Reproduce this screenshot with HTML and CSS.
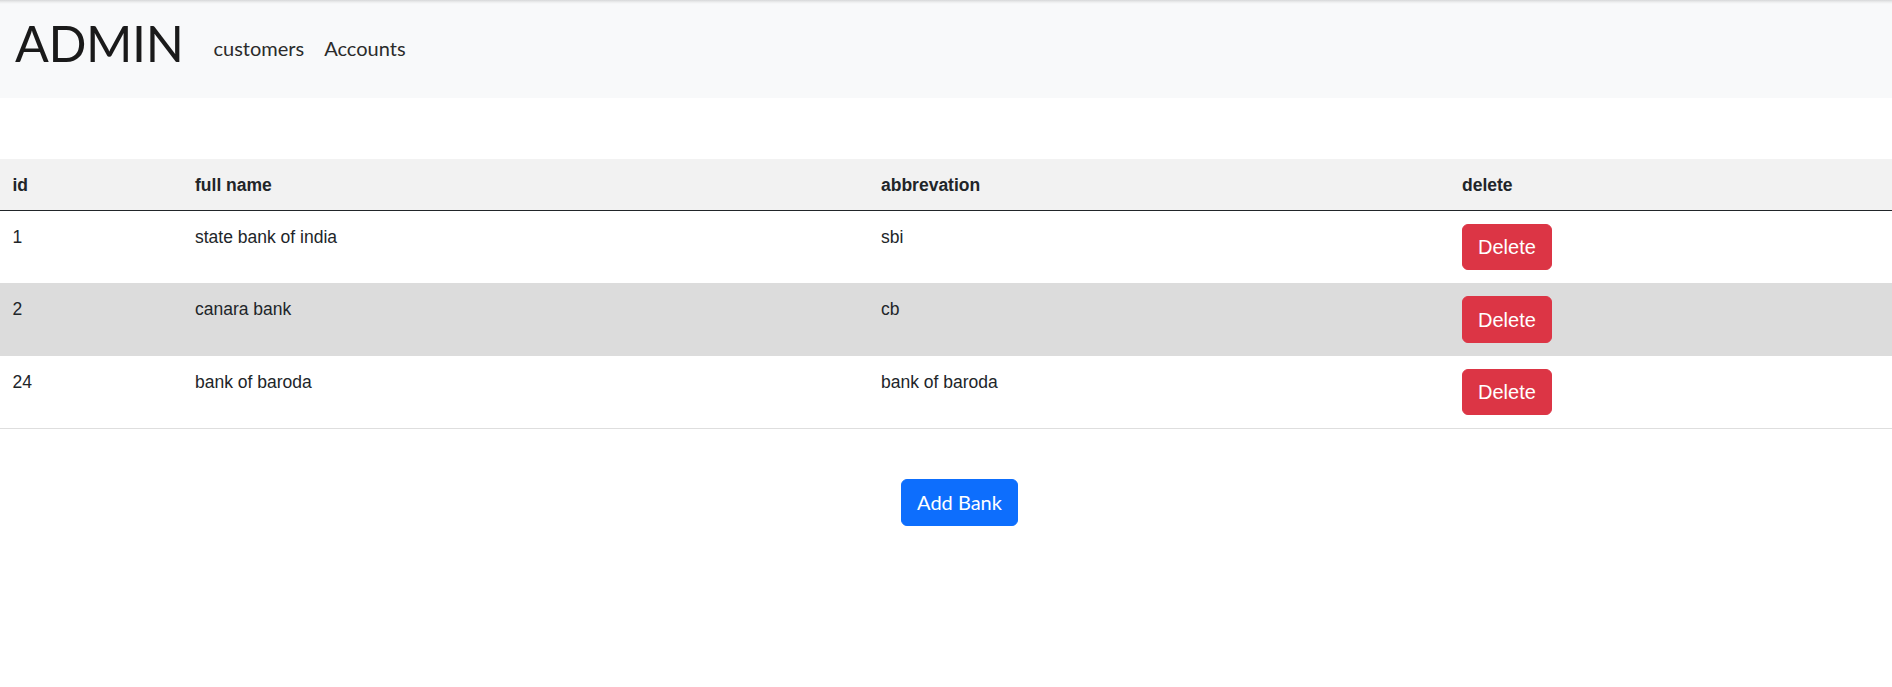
FILE: index.html
```html
<!DOCTYPE html>
<html>
<head>
<meta charset="utf-8">
<title>Admin - Banks</title>
<link rel="stylesheet" href="styles.css">
</head>
<body>
<nav class="navbar">
  <h1 class="brand">ADMIN</h1>
  <ul class="nav">
    <li><a class="nav-link" href="#">customers</a></li>
    <li><a class="nav-link" href="#">Accounts</a></li>
  </ul>
</nav>

<main class="content">
  <table class="banks">
    <colgroup>
      <col class="c-id">
      <col class="c-name">
      <col class="c-abbr">
      <col class="c-del">
    </colgroup>
    <thead>
      <tr><th>id</th><th>full name</th><th>abbrevation</th><th>delete</th></tr>
    </thead>
    <tbody>
      <tr>
        <td>1</td><td>state bank of india</td><td>sbi</td>
        <td><button class="btn-delete">Delete</button></td>
      </tr>
      <tr class="alt">
        <td>2</td><td>canara bank</td><td>cb</td>
        <td><button class="btn-delete">Delete</button></td>
      </tr>
      <tr>
        <td>24</td><td>bank of baroda</td><td>bank of baroda</td>
        <td><button class="btn-delete">Delete</button></td>
      </tr>
    </tbody>
  </table>

  <div class="actions">
    <button class="btn-add">Add Bank</button>
  </div>
</main>
</body>
</html>
```

FILE: styles.css
```css
* { box-sizing: border-box; }

html, body {
  margin: 0;
  padding: 0;
  background: #fff;
  color: #212529;
}

.navbar {
  display: flex;
  align-items: flex-start;
  height: 98px;
  padding: 12.5px 15px 0;
  background: linear-gradient(to bottom, #d6d7d8 0, #eceded 2px, #f8f9fa 4px) #f8f9fa;
  font-family: Lato, "Noto Sans", sans-serif;
}

.brand {
  margin: 0 20px 0 0;
  font-size: 50px;
  line-height: 60px;
  font-weight: 400;
  letter-spacing: -0.4px;
  color: #1a1a1a;
}

.nav {
  display: flex;
  list-style: none;
  margin: 20px 0 0;
  padding: 0;
}

.nav-link {
  display: block;
  padding: 0 10px;
  font-size: 20px;
  line-height: 30px;
  color: #2b2b2b;
  text-decoration: none;
}

.content {
  padding-top: 61px;
}

.banks {
  width: 100%;
  border-collapse: collapse;
  table-layout: fixed;
  font-family: "Liberation Sans", Arial, sans-serif;
  font-size: 17.5px;
  line-height: 1.5;
  color: #212529;
}

.c-id { width: 182.5px; }
.c-name { width: 686px; }
.c-abbr { width: 581px; }
.c-del { width: auto; }

.banks th,
.banks td {
  padding: 12.5px;
  text-align: left;
  vertical-align: top;
}

.banks thead th {
  background: #f2f2f2;
  font-weight: 700;
  border-bottom: 1px solid #212529;
}

.banks tbody tr {
  border-bottom: 1px solid #dcdcdc;
}

.banks tbody tr:last-child {
  border-bottom-color: #dedede;
}

.banks tbody tr.alt td {
  background: #dcdcdc;
}

.btn-delete {
  display: block;
  height: 46.5px;
  padding: 0 15px;
  border: 1px solid #dc3545;
  border-radius: 6px;
  background: #dc3545;
  color: #fff;
  font-family: "Liberation Sans", Arial, sans-serif;
  font-size: 20px;
  line-height: 30px;
  cursor: pointer;
}

.actions {
  display: flex;
  justify-content: center;
  padding: 50px 0 0 27px;
}

.btn-add {
  height: 47px;
  padding: 0 15px;
  border: 1px solid #0d6efd;
  border-radius: 6px;
  background: #0d6efd;
  color: #fff;
  font-family: Lato, "Noto Sans", sans-serif;
  font-size: 20px;
  line-height: 30px;
  cursor: pointer;
}
```
